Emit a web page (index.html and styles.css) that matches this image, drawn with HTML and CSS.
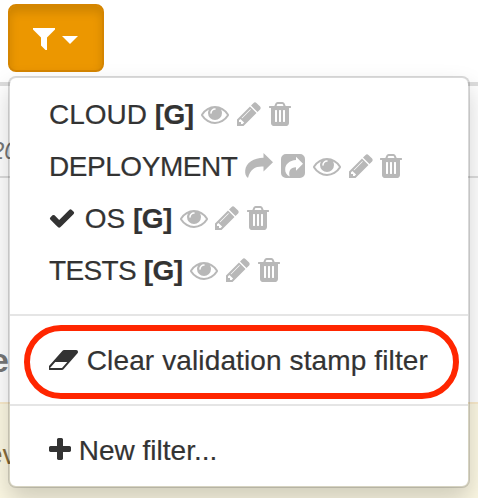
FILE: index.html
```
<!DOCTYPE html>
<html lang="en">
<head>
<meta charset="utf-8">
<title>Validation stamp filters</title>
<link rel="stylesheet" href="styles.css">
</head>
<body>
<svg class="defs" aria-hidden="true">
  <symbol id="eye" viewBox="0 0 1792 1792"><path d="M1664 960q-152-236-381-353 61 104 61 225 0 185-131.5 316.5t-316.5 131.5-316.5-131.5-131.5-316.5q0-121 61-225-229 117-381 353 133 205 333.5 326.5t434.5 121.5 434.5-121.5 333.5-326.5zm-720-384q0-20-14-34t-34-14q-125 0-214.5 89.5t-89.5 214.5q0 20 14 34t34 14 34-14 14-34q0-86 61-147t147-61q20 0 34-14t14-34zm848 384q0 34-20 69-140 230-376.5 368.5t-499.5 138.5-499.5-139-376.5-368q-20-35-20-69t20-69q140-229 376.5-368t499.5-139 499.5 139 376.5 368q20 35 20 69z"/></symbol>
  <symbol id="pencil" viewBox="128 0 1536 1792"><path d="M491 1536l91-91-235-235-91 91v107h128v128h107zm523-928q0-22-22-22-10 0-17 7l-542 542q-7 7-7 17 0 22 22 22 10 0 17-7l542-542q7-7 7-17zm-54-192l416 416-832 832h-416v-416zm683 96q0 53-37 90l-166 166-416-416 166-165q36-38 90-38 53 0 91 38l235 234q37 39 37 91z"/></symbol>
  <symbol id="trash" viewBox="192 0 1408 1792"><path d="M704 1376v-704q0-14-9-23t-23-9h-64q-14 0-23 9t-9 23v704q0 14 9 23t23 9h64q14 0 23-9t9-23zm256 0v-704q0-14-9-23t-23-9h-64q-14 0-23 9t-9 23v704q0 14 9 23t23 9h64q14 0 23-9t9-23zm256 0v-704q0-14-9-23t-23-9h-64q-14 0-23 9t-9 23v704q0 14 9 23t23 9h64q14 0 23-9t9-23zm-544-992h448l-48-117q-7-9-17-11h-317q-10 2-17 11zm928 32v64q0 14-9 23t-23 9h-96v948q0 83-47 143.5t-113 60.5h-832q-66 0-113-58.5t-47-141.5v-952h-96q-14 0-23-9t-9-23v-64q0-14 9-23t23-9h309l70-167q15-37 54-63t79-26h320q40 0 79 26t54 63l70 167h309q14 0 23 9t9 23z"/></symbol>
  <symbol id="share" viewBox="0 0 28 28"><path d="M18.5 1 28 10.300 18.500 19.500V14.500C11 14 5.500 16.500 3 26 .5 24.500 0 21.500 .2 18.500 .8 10.500 9 5.700 18.500 5.700Z"/></symbol>
  <symbol id="share-box" viewBox="0 0 24 28"><path fill-rule="evenodd" d="M5 2H19A5 5 0 0 1 24 7V21A5 5 0 0 1 19 26H5A5 5 0 0 1 0 21V7A5 5 0 0 1 5 2ZM15 4.800V8C8.500 8.500 4.200 12 4.200 17.500 4.200 20.500 5.500 23 8.700 24.500 7.200 19 9.500 15.500 15 15.300V18.800L22 11.800Z"/></symbol>
  <symbol id="check" viewBox="128 0 1664 1792"><path d="M1671 566q0 40-28 68l-724 724-136 136q-28 28-68 28t-68-28l-136-136-362-362q-28-28-28-68t28-68l136-136q28-28 68-28t68 28l294 295 656-657q28-28 68-28t68 28l136 136q28 28 28 68z"/></symbol>
  <symbol id="eraser" viewBox="0 0 1920 1792"><path d="M832 1408l336-384h-768l-336 384h768zm1013-1077q15 34 9.500 71.500t-30.500 65.500l-896 1024q-38 44-96 44h-768q-38 0-69.500-20.500t-47.500-54.500q-15-34-9.500-71.500t30.500-65.500l896-1024q38-44 96-44h768q38 0 69.500 20.500t47.500 54.500z"/></symbol>
  <symbol id="plus" viewBox="192 0 1408 1792"><path d="M1600 736v192q0 40-28 68t-68 28h-416v416q0 40-28 68t-68 28h-192q-40 0-68-28t-28-68v-416h-416q-40 0-68-28t-28-68v-192q0-40 28-68t68-28h416v-416q0-40 28-68t68-28h192q40 0 68 28t28 68v416h416q40 0 68 28t28 68z"/></symbol>
</svg>

<header class="toolbar">
  <div class="dropdown">
    <button class="btn" type="button" aria-label="Filter">
      <svg class="funnel" viewBox="0 0 22 22"><path d="M0 0H22V1.500L14 9.500V22H12.500L8 17.500V9.500L0 1.500Z"/></svg>
      <svg class="caret" viewBox="0 0 16 8"><path d="M0 0H16L8 8Z"/></svg>
    </button>
    <ul class="menu">
      <li class="item"><span>CLOUD</span> <b>[G]</b> <svg class="i w28"><use href="#eye"/></svg> <svg class="i w24"><use href="#pencil"/></svg> <svg class="i w22"><use href="#trash"/></svg></li>
      <li class="item"><span class="tight">DEPLOYMENT</span> <svg class="i w28"><use href="#share"/></svg> <svg class="i w24"><use href="#share-box"/></svg> <svg class="i w28"><use href="#eye"/></svg> <svg class="i w24"><use href="#pencil"/></svg> <svg class="i w22"><use href="#trash"/></svg></li>
      <li class="item"><svg class="i dark w28 check"><use href="#check"/></svg> <span>OS</span> <b>[G]</b> <svg class="i w28"><use href="#eye"/></svg> <svg class="i w24"><use href="#pencil"/></svg> <svg class="i w22"><use href="#trash"/></svg></li>
      <li class="item"><span class="tighter">TESTS</span> <b>[G]</b> <svg class="i w28"><use href="#eye"/></svg> <svg class="i w24"><use href="#pencil"/></svg> <svg class="i w22"><use href="#trash"/></svg></li>
      <li class="divider"></li>
      <li class="item marked"><svg class="i dark w30"><use href="#eraser"/></svg> <span class="wide">Clear validation stamp filter</span></li>
      <li class="divider"></li>
      <li class="item"><svg class="i dark w22"><use href="#plus"/></svg> <span>New filter...</span></li>
    </ul>
  </div>
</header>
<main>
  <div class="date">20</div>
  <h2 class="heading">e</h2>
  <div class="notice">ev</div>
</main>
</body>
</html>
```
FILE: styles.css
```
*, *::after { box-sizing: border-box; }
html, body { height: 100%; }
body {
  margin: 0;
  overflow: hidden;
  background: #fff;
  color: #333;
  font: 28px/40px "Liberation Sans", Arial, sans-serif;
}
.defs { display: none; }

.toolbar {
  height: 86px;
  padding: 4px 8px 0;
  border-bottom: 4px solid #ddd;
}
.dropdown { position: relative; width: 96px; }
.btn {
  display: flex;
  align-items: center;
  gap: 7px;
  width: 96px;
  height: 68px;
  padding: 2px 0 0 23px;
  border: 2px solid #d58500;
  border-radius: 8px;
  background: #ec9700;
  box-shadow: inset 0 6px 10px rgba(0, 0, 0, .125);
}
.btn svg { fill: #fff; }
.funnel { width: 22px; height: 22px; }
.caret { width: 16px; height: 8px; margin-top: 1px; }

.menu {
  position: absolute;
  z-index: 1;
  top: 72px;
  left: 0;
  width: 462px;
  margin: 0;
  padding: 10px 0;
  list-style: none;
  background: #fff;
  background-clip: padding-box;
  border: 2px solid rgba(0, 0, 0, .15);
  border-radius: 8px;
  box-shadow: 0 12px 24px rgba(0, 0, 0, .175);
}
.item {
  position: relative;
  height: 52px;
  padding: 7px 0 5px 39px;
  white-space: nowrap;
}
.item span, .item b { -webkit-text-stroke: .2px #333; }
.item b { letter-spacing: -.55px; }
.tight { letter-spacing: -.45px; }
.tighter { letter-spacing: -.65px; }
.wide { letter-spacing: .12px; }
.divider { height: 2px; margin: 18px 0; background: #e5e5e5; }
.i { height: 28px; vertical-align: -4px; fill: #b8b8b8; }
.dark { fill: #333; }
.w22 { width: 22px; }
.w24 { width: 24px; }
.w28 { width: 28px; }
.w30 { width: 30px; }
.marked::after {
  content: "";
  position: absolute;
  top: -9px;
  left: 14px;
  width: 435px;
  height: 74px;
  border: 6px solid #ff2600;
  border-radius: 37px;
}

.date {
  height: 92px;
  padding-top: 45px;
  border-bottom: 2px solid #ddd;
  color: #777;
  font-size: 24px;
  font-style: italic;
  text-indent: -9px;
}
.heading {
  height: 224px;
  margin: 0;
  padding-top: 162px;
  font-size: 34px;
  color: #777;
  text-indent: -10px;
}
.notice {
  height: 110px;
  padding-top: 31px;
  border-top: 2px solid #faebcc;
  background: #fcf8e3;
  color: #8a6d3b;
  text-indent: -13px;
}
```
